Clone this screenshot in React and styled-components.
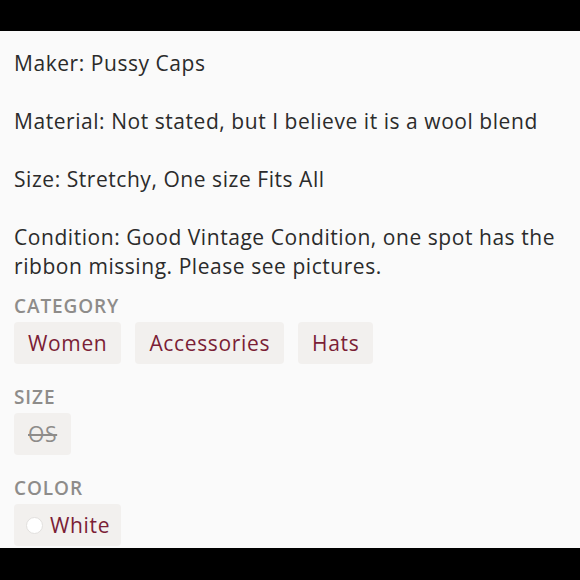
import styled, { createGlobalStyle } from "styled-components";

const GlobalStyle = createGlobalStyle`
  html, body {
    margin: 0;
    padding: 0;
    background: #000000;
  }
`;

const Frame = styled.div`
  width: 580px;
  height: 580px;
  display: flex;
  flex-direction: column;
  background: #000000;
  overflow: hidden;
`;

const Bar = styled.div`
  height: ${(p) => p.h}px;
  flex-shrink: 0;
  background: #000000;
`;

const Content = styled.div`
  flex: 1;
  min-height: 0;
  overflow: hidden;
  background: #fafafa;
  padding: 18px 14px 0;
  font-family: "Open Sans", Lato, sans-serif;
  color: #2b2b2b;
`;

const Description = styled.p`
  margin: 0;
  font-size: 21px;
  line-height: 29px;
  letter-spacing: 0.55px;
  white-space: pre-line;
`;

const Label = styled.div`
  margin-top: ${(p) => p.top}px;
  font-size: 19px;
  line-height: 22px;
  font-weight: 600;
  letter-spacing: 0.9px;
  color: #8e8c8a;
`;

const ChipRow = styled.div`
  display: flex;
  gap: 14px;
  margin-top: 5px;
`;

const Chip = styled.div`
  height: 42px;
  display: flex;
  align-items: center;
  gap: 7px;
  padding: ${(p) => (p.swatch ? "0 11px 0 12px" : "0 14px")};
  border-radius: 4px;
  background: #f2f0ee;
  font-size: 21px;
  letter-spacing: 0.65px;
  color: ${(p) => (p.muted ? "#8e8c8a" : "#7b1e36")};
  text-decoration: ${(p) => (p.muted ? "line-through" : "none")};
`;

const Swatch = styled.span`
  width: 15px;
  height: 15px;
  border-radius: 50%;
  background: #ffffff;
  border: 1px solid #e2e0de;
`;

const description = `Maker: Pussy Caps

Material: Not stated, but I believe it is a wool blend

Size: Stretchy, One size Fits All

Condition: Good Vintage Condition, one spot has the ribbon missing. Please see pictures.`;

export default function App() {
  return (
    <>
      <GlobalStyle />
      <Frame>
        <Bar h={31} />
        <Content>
          <Description>{description}</Description>
          <Label top={14}>CATEGORY</Label>
          <ChipRow>
            <Chip>Women</Chip>
            <Chip>Accessories</Chip>
            <Chip>Hats</Chip>
          </ChipRow>
          <Label top={22}>SIZE</Label>
          <ChipRow>
            <Chip muted>OS</Chip>
          </ChipRow>
          <Label top={22}>COLOR</Label>
          <ChipRow>
            <Chip swatch>
              <Swatch />
              White
            </Chip>
          </ChipRow>
        </Content>
        <Bar h={32} />
      </Frame>
    </>
  );
}
